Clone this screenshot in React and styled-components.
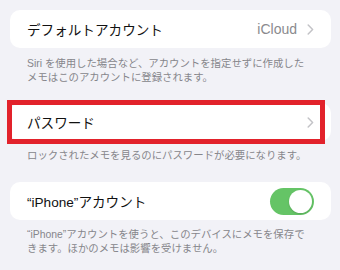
import React from 'react';
import styled, { createGlobalStyle } from 'styled-components';

const GlobalStyle = createGlobalStyle`
  html, body {
    margin: 0;
    padding: 0;
    background: #f2f2f7;
  }
  body {
    font-family: "Liberation Sans", "Noto Sans CJK JP", sans-serif;
    -webkit-font-smoothing: antialiased;
  }
`;

const Page = styled.div`
  width: 340px;
  height: 270px;
  box-sizing: border-box;
  padding: 10px 9px 0 10px;
  display: flex;
  flex-direction: column;
  overflow: hidden;
`;

const Section = styled.section`
  display: flex;
  flex-direction: column;
  margin-bottom: ${p => p.$gap || 0}px;
`;

const Card = styled.div`
  position: relative;
  background: #ffffff;
  border-radius: 10px;
  height: ${p => p.$height || 38}px;
  display: flex;
  align-items: center;
  padding: 0 17px;
`;

const Label = styled.span`
  flex: 1;
  font-size: 13.6px;
  color: #111111;
  letter-spacing: 0;
`;

const Value = styled.span`
  font-size: 14px;
  color: #8a8a8e;
  margin-right: 10px;
`;

const Chevron = () => (
  <svg width="7" height="11" viewBox="0 0 7 11" style={{ display: 'block' }}>
    <path d="M1.2 1 L5.6 5.5 L1.2 10" fill="none" stroke="#c3c3c7" strokeWidth="1.5" strokeLinecap="round" strokeLinejoin="round" />
  </svg>
);

const Footnote = styled.p`
  margin: ${p => p.$top || 9}px 0 0 17px;
  font-size: 10.4px;
  line-height: 14px;
  color: #86868b;
`;

const Highlight = styled.div`
  position: absolute;
  left: -3px;
  top: -3px;
  right: 6px;
  bottom: -3px;
  border: 5px solid #e2222b;
  pointer-events: none;
`;

const Toggle = styled.div`
  position: relative;
  width: 44px;
  height: 27px;
  border-radius: 14px;
  background: ${p => (p.$on ? '#65c466' : '#e9e9ea')};
`;

const Knob = styled.div`
  position: absolute;
  top: 2px;
  left: ${p => (p.$on ? 19 : 2)}px;
  width: 23px;
  height: 23px;
  border-radius: 50%;
  background: #ffffff;
  box-shadow: 0 1px 2px rgba(0, 0, 0, 0.15);
`;

export default function App() {
  return (
    <>
      <GlobalStyle />
      <Page>
        <Section $gap={18}>
          <Card>
            <Label>デフォルトアカウント</Label>
            <Value>iCloud</Value>
            <Chevron />
          </Card>
          <Footnote $top={9}>
            Siri を使用した場合など、アカウントを指定せずに作成した
            <br />
            メモはこのアカウントに登録されます。
          </Footnote>
        </Section>

        <Section $gap={19}>
          <Card $height={38}>
            <Label>パスワード</Label>
            <Chevron />
            <Highlight />
          </Card>
          <Footnote $top={8}>ロックされたメモを見るのにパスワードが必要になります。</Footnote>
        </Section>

        <Section>
          <Card>
            <Label>“iPhone”アカウント</Label>
            <Toggle $on>
              <Knob $on />
            </Toggle>
          </Card>
          <Footnote $top={8}>
            “iPhone”アカウントを使うと、このデバイスにメモを保存で
            <br />
            きます。ほかのメモは影響を受けません。
          </Footnote>
        </Section>
      </Page>
    </>
  );
}
